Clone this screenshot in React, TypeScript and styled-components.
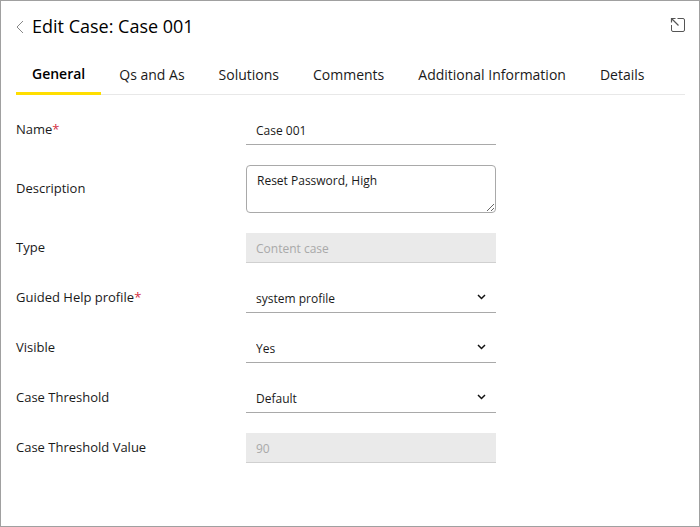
import React from "react";
import styled, { createGlobalStyle, css } from "styled-components";

const GlobalStyle = createGlobalStyle`
  *, *::before, *::after { box-sizing: border-box; }
  body { margin: 0; background: #fff; }
  body, button, input, textarea, select {
    font-family: "Open Sans", "Noto Sans", sans-serif;
  }
`;

const Window = styled.main`
  min-height: 100vh;
  padding: 12px 14px 16px 15px;
  border: 1px solid #a0a0a0;
  background: #fff;
  color: #1a1a1a;
`;

const Header = styled.header`
  display: flex;
  align-items: center;
  height: 28px;
`;

const IconButton = styled.button`
  display: flex;
  padding: 0;
  border: 0;
  background: none;
  color: #666;
  cursor: pointer;
`;

const Title = styled.h1`
  flex: 1;
  margin: 0 0 0 8px;
  padding-bottom: 2px;
  font-size: 18px;
  font-weight: 400;
  line-height: 26px;
  color: #000;
`;

const TabBar = styled.nav`
  display: flex;
  gap: 2px;
  margin-top: 14px;
  border-bottom: 1px solid #e8e8e8;
`;

const Tab = styled.button<{ $active?: boolean }>`
  height: 40px;
  margin-bottom: -1px;
  padding: ${(p) => (p.$active ? "0 16px" : "2px 16px 0")};
  border: 0;
  border-bottom: 3px solid ${(p) => (p.$active ? "#ffde00" : "transparent")};
  background: none;
  color: ${(p) => (p.$active ? "#000" : "#1a1a1a")};
  font-size: 14px;
  font-weight: ${(p) => (p.$active ? 600 : 400)};
  line-height: 20px;
  white-space: nowrap;
  cursor: pointer;
`;

const Form = styled.form`
  display: grid;
  gap: 20px;
  margin-top: 20px;
`;

const Row = styled.div`
  display: grid;
  grid-template-columns: 230px minmax(0, 250px);
  align-items: center;
`;

const Label = styled.label`
  padding-bottom: 2px;
  font-size: 13px;
  line-height: 20px;
`;

const Required = styled.span`
  color: #d32f3f;
`;

const fieldStyle = css`
  display: block;
  width: 100%;
  height: 30px;
  padding: 2px 10px 0;
  border: 0;
  border-bottom: 1px solid #a9a9a9;
  border-radius: 0;
  outline: 0;
  background: #fff;
  color: #1a1a1a;
  font-size: 12px;
  line-height: 20px;
`;

const TextInput = styled.input`
  ${fieldStyle}
  &:disabled {
    border-bottom-color: #d0d0d0;
    background: #eaeaea;
    color: #a9a9a9;
  }
`;

const TextArea = styled.textarea`
  ${fieldStyle}
  height: 48px;
  padding: 5px 10px;
  border: 1px solid #a9a9a9;
  border-radius: 4px;
  resize: both;
`;

const SelectBox = styled.div`
  position: relative;
`;

const Select = styled.select`
  ${fieldStyle}
  appearance: none;
  padding-right: 30px;
`;

const Chevron = styled.svg`
  position: absolute;
  top: 10px;
  right: 10px;
  pointer-events: none;
`;

const tabs = ["General", "Qs and As", "Solutions", "Comments", "Additional Information", "Details"];

type Field = {
  id: string;
  label: string;
  value: string;
  kind: "text" | "area" | "select";
  required?: boolean;
  disabled?: boolean;
};

const fields: Field[] = [
  { id: "name", label: "Name", value: "Case 001", kind: "text", required: true },
  { id: "description", label: "Description", value: "Reset Password, High", kind: "area" },
  { id: "type", label: "Type", value: "Content case", kind: "text", disabled: true },
  { id: "profile", label: "Guided Help profile", value: "system profile", kind: "select", required: true },
  { id: "visible", label: "Visible", value: "Yes", kind: "select" },
  { id: "threshold", label: "Case Threshold", value: "Default", kind: "select" },
  { id: "threshold-value", label: "Case Threshold Value", value: "90", kind: "text", disabled: true },
];

function Control({ field }: { field: Field }) {
  const { id, value, kind, disabled, required } = field;
  if (kind === "area") return <TextArea id={id} defaultValue={value} />;
  if (kind === "select") {
    return (
      <SelectBox>
        <Select id={id} defaultValue={value} required={required}>
          <option>{value}</option>
        </Select>
        <Chevron width="9" height="8" viewBox="0 0 9 8" fill="none" aria-hidden="true">
          <path d="M1 2l3.5 3.5L8 2" stroke="#111" strokeWidth="1.5" />
        </Chevron>
      </SelectBox>
    );
  }
  return <TextInput id={id} type="text" defaultValue={value} disabled={disabled} required={required} />;
}

export default function App() {
  return (
    <>
      <GlobalStyle />
      <Window>
        <Header>
          <IconButton type="button" aria-label="Back">
            <svg width="8" height="14" viewBox="0 0 8 14" fill="none">
              <path d="M7 1L1 7l6 6" stroke="#888" />
            </svg>
          </IconButton>
          <Title>Edit Case: Case 001</Title>
          <IconButton type="button" aria-label="Open in new window">
            <svg width="16" height="24" viewBox="0 0 16 24" fill="none" stroke="#555">
              <path d="M8.5 3.5H14q1.5 0 1.5 1.5v10q0 1.5-1.5 1.5H4q-1.5 0-1.5-1.5v-5" />
              <path d="M2.5 7.5v-4H6.5M2.5 3.5l7 7" strokeWidth="1.2" />
            </svg>
          </IconButton>
        </Header>
        <TabBar role="tablist">
          {tabs.map((name, i) => (
            <Tab key={name} type="button" role="tab" aria-selected={i === 0} $active={i === 0}>
              {name}
            </Tab>
          ))}
        </TabBar>
        <Form>
          {fields.map((field) => (
            <Row key={field.id}>
              <Label htmlFor={field.id}>
                {field.label}
                {field.required && <Required>*</Required>}
              </Label>
              <Control field={field} />
            </Row>
          ))}
        </Form>
      </Window>
    </>
  );
}
